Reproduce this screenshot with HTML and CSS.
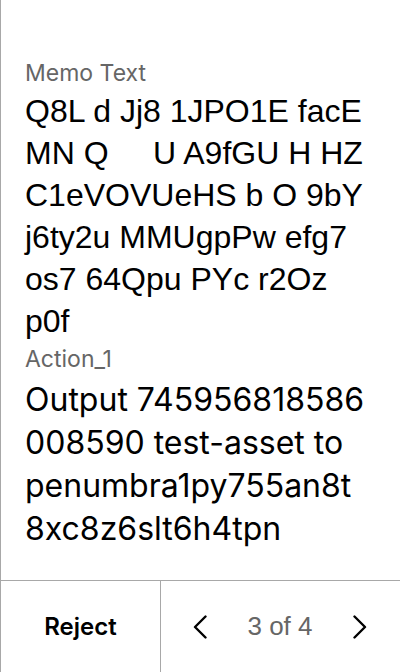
FILE: index.html
```html
<!DOCTYPE html>
<html>
<head>
<meta charset="utf-8">
<link rel="stylesheet" href="styles.css">
</head>
<body>
<div class="screen">
  <div class="content">
    <div class="label">Memo Text</div>
    <div class="memo">Q8L d Jj8 1JPO1E facE MN Q     U A9fGU H HZ C1eVOVUeHS b O 9bY j6ty2u MMUgpPw efg7 os7 64Qpu PYc r2Oz p0f</div>
    <div class="label label-action">Action_1</div>
    <div class="action">Output 745956818586008590 test-asset to penumbra1py755an8t8xc8z6slt6h4tpn</div>
  </div>
  <div class="footer">
    <div class="reject">Reject</div>
    <div class="pager">
      <svg class="chev" width="14" height="24" viewBox="0 0 14 24"><path d="M12.5 1.5 L2 12 L12.5 22.5" fill="none" stroke="#000" stroke-width="2.4" stroke-linecap="round" stroke-linejoin="round"/></svg>
      <span class="count">3 of 4</span>
      <svg class="chev" width="14" height="24" viewBox="0 0 14 24"><path d="M1.5 1.5 L12 12 L1.5 22.5" fill="none" stroke="#000" stroke-width="2.4" stroke-linecap="round" stroke-linejoin="round"/></svg>
    </div>
  </div>
</div>
</body>
</html>
```

FILE: styles.css
```css
html, body {
  margin: 0;
  padding: 0;
  background: #fff;
}
.screen {
  width: 399px;
  height: 672px;
  border-left: 1px solid #a8a8a8;
  display: flex;
  flex-direction: column;
  font-family: Inter, "Liberation Sans", sans-serif;
}
.content {
  flex: 1;
  padding: 58px 32px 0 24px;
}
.label {
  font-size: 23px;
  line-height: 30px;
  color: #666;
}
.label-action {
  margin-top: 2px;
}
.memo {
  font-family: "Liberation Sans", Arial, sans-serif;
  font-size: 32px;
  line-height: 42px;
  color: #000;
  white-space: pre-wrap;
  margin-top: 2px;
}
.action {
  font-size: 32px;
  line-height: 43px;
  color: #000;
  word-break: break-all;
  margin-top: 4px;
}
.footer {
  height: 91px;
  border-top: 1px solid #a8a8a8;
  display: flex;
}
.reject {
  width: 159px;
  border-right: 1px solid #a8a8a8;
  display: flex;
  align-items: center;
  justify-content: center;
  font-size: 24px;
  font-weight: 600;
  color: #000;
}
.pager {
  flex: 1;
  display: flex;
  align-items: center;
  justify-content: space-between;
  padding: 0 33px 0 32px;
}
.count {
  font-family: "Liberation Sans", Arial, sans-serif;
  font-size: 26px;
  color: #666;
}
```
